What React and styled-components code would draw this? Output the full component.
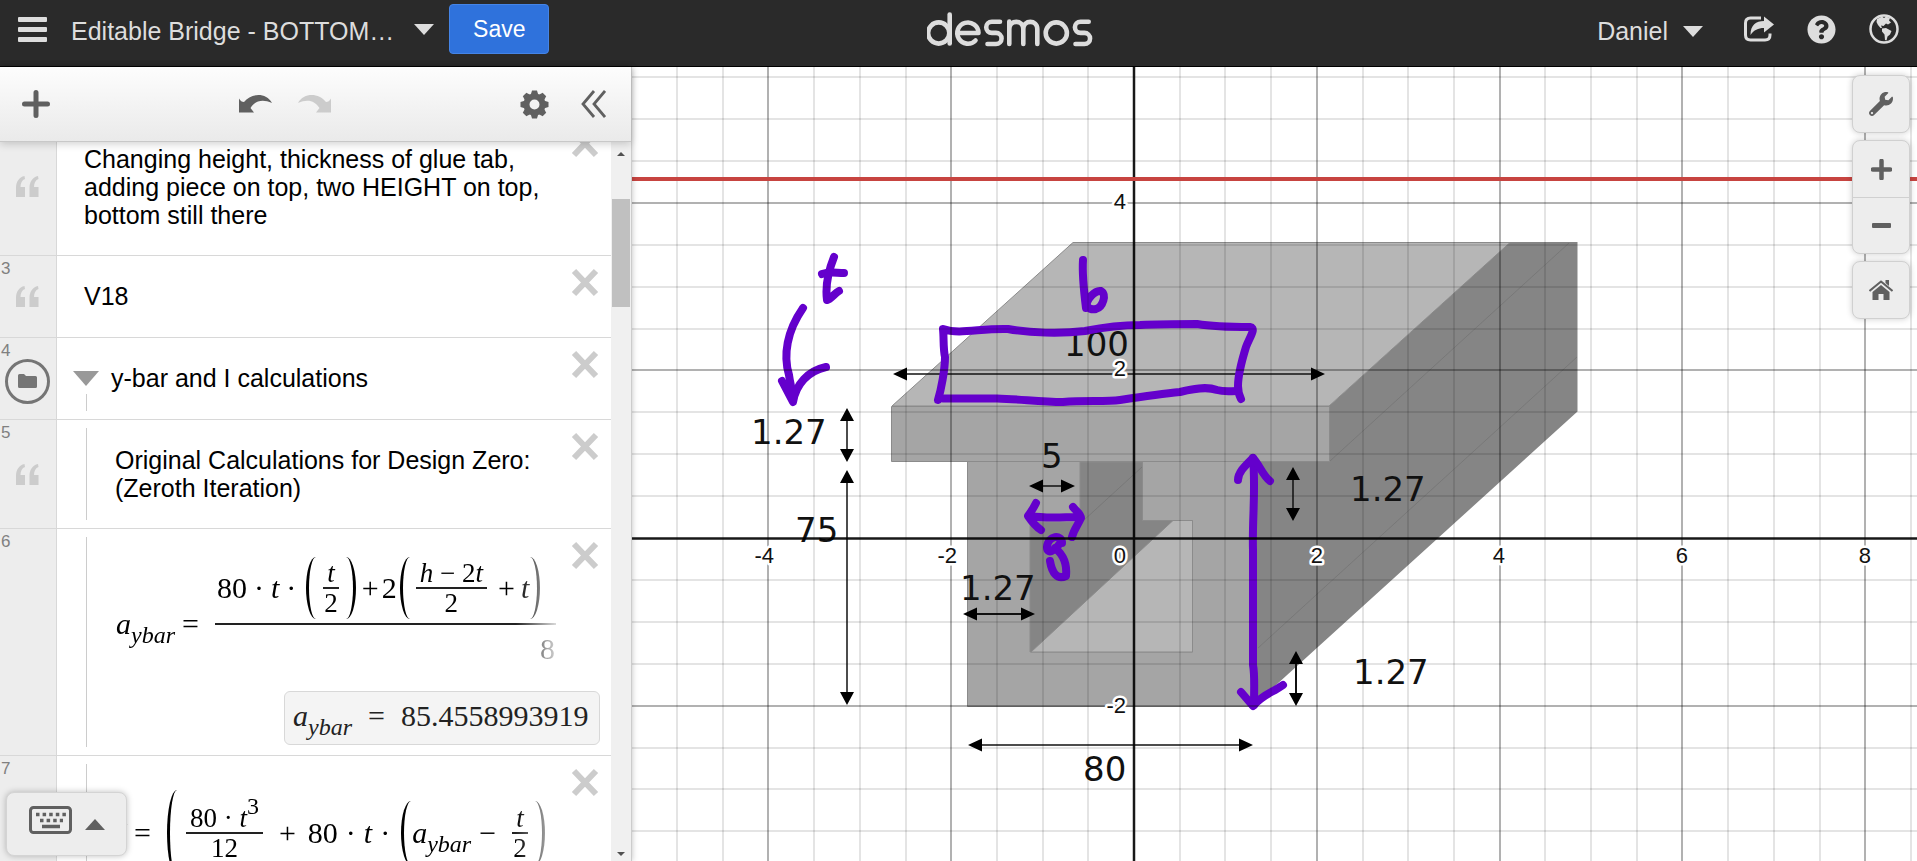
import React from "react";
import styled, { createGlobalStyle, css } from "styled-components";
import { FaWrench, FaQuestionCircle } from "react-icons/fa";

const Global = createGlobalStyle`
  * { box-sizing: border-box; }
  body { margin: 0; background: #fff; overflow: hidden; font-family: "Liberation Sans", Arial, sans-serif; }
  button { font: inherit; color: inherit; background: none; border: 0; padding: 0; cursor: pointer; }
  svg { display: block; }
`;

const Page = styled.div`
  height: 100vh;
  display: flex;
  flex-direction: column;
`;

/* ---------- header ---------- */

const Header = styled.header`
  flex: none;
  height: 67px;
  display: grid;
  grid-template-columns: 9fr 166px 8fr;
  background: #2a2a2a;
  border-bottom: 1px solid #000;
  color: #ddd;
  font-size: 24px;
`;

const HeaderLeft = styled.div`
  display: flex;
  align-items: center;
  height: 58px;
  padding-left: 18px;
`;

const Burger = styled.button`
  width: 29px;
  height: 25px;
  display: flex;
  flex-direction: column;
  justify-content: space-between;
  margin-right: 24px;
`;

const BurgerBar = styled.span`
  height: 5px;
  border-radius: 1px;
  background: #ddd;
`;

const Title = styled.h1`
  margin: 4px 20px 0 0;
  font-size: 25px;
  font-weight: 400;
  line-height: 28px;
  white-space: nowrap;
`;

const Caret = styled.span`
  display: block;
  width: 0;
  height: 0;
  border: ${(p) => p.$half}px solid transparent;
  border-bottom-width: 0;
  border-top: ${(p) => p.$depth}px solid ${(p) => p.$color};
  ${(p) =>
    p.$up &&
    css`
      border-top: 0;
      border-bottom: ${p.$depth}px solid ${p.$color};
    `}
`;

const CaretButton = styled.button`
  margin-right: 15px;
`;

const SaveButton = styled.button`
  width: 100px;
  height: 50px;
  border: 1px solid #4584e6;
  border-radius: 4px;
  background: #2f72dc;
  color: #fff;
  font-size: 23px;
`;

const Logo = styled.a`
  padding-top: 11px;
`;

const HeaderRight = styled.div`
  display: flex;
  align-items: center;
  justify-content: flex-end;
  height: 58px;
  padding-right: 18px;
`;

const Account = styled.button`
  display: flex;
  align-items: center;
  gap: 15px;
  margin: 4px 41px 0 0;
  font-size: 25px;
`;

const HeaderIcon = styled.button`
  margin-left: ${(p) => p.$gap || 0}px;
`;

/* ---------- side panel ---------- */

const Main = styled.main`
  flex: 1;
  min-height: 0;
  display: flex;
`;

const Panel = styled.aside`
  position: relative;
  z-index: 1;
  flex: none;
  width: 632px;
  display: flex;
  flex-direction: column;
  background: #fff;
  border-right: 1px solid #ccc;
  box-shadow: 0 0 6px rgba(0, 0, 0, 0.25);
`;

const Toolbar = styled.div`
  position: relative;
  z-index: 2;
  flex: none;
  height: 75px;
  display: flex;
  align-items: center;
  padding: 0 25px 0 22px;
  background: linear-gradient(#fdfdfd, #eaeaea);
  border-bottom: 1px solid #c8c8c8;
  box-shadow: 0 2px 8px rgba(0, 0, 0, 0.18);
`;

const ToolGroup = styled.div`
  display: flex;
  align-items: center;
  gap: ${(p) => p.$gap}px;
  margin-left: ${(p) => (p.$push ? "auto" : `${p.$left || 0}px`)};
`;

const ListArea = styled.div`
  flex: 1;
  min-height: 0;
  display: flex;
`;

const List = styled.ol`
  flex: 1;
  margin: 0;
  padding: 0;
  list-style: none;
  overflow: hidden;
`;

const ListScroll = styled.div`
  margin-top: -25px;
`;

const Row = styled.li`
  display: grid;
  grid-template-columns: 57px 1fr;
  border-bottom: 1px solid #d8d8d8;
`;

const Gutter = styled.div`
  position: relative;
  display: flex;
  align-items: center;
  padding-left: 16px;
  background: #ededed;
  border-right: 1px solid #d8d8d8;
`;

const RowNumber = styled.span`
  position: absolute;
  left: 1px;
  top: 3px;
  font-size: 17px;
  line-height: 20px;
  color: #808080;
`;

const FolderButton = styled.button`
  width: 45px;
  height: 45px;
  flex: none;
  display: grid;
  place-items: center;
  margin: 5px 0 0 -11px;
  border: 3px solid #757575;
  border-radius: 50%;
`;

const Body = styled.div`
  position: relative;
  padding: ${(p) => p.$pad || "28px 0 26px"};
  padding-left: ${(p) => p.$indent}px;
`;

const TreeLine = styled.span`
  position: absolute;
  left: 29px;
  top: ${(p) => p.$top || 8}px;
  bottom: 8px;
  width: 1px;
  background: #ccc;
`;

const Note = styled.p`
  margin: 0;
  width: ${(p) => p.$w || 470}px;
  font-size: 25px;
  line-height: 28px;
  color: #000;
`;

const FolderTitle = styled(Note)`
  display: flex;
  align-items: center;
  gap: 12px;
`;

const CloseButton = styled.button`
  position: absolute;
  right: 12px;
  top: 12px;
`;

/* ---------- math ---------- */

const Math_ = styled.div`
  display: flex;
  align-items: center;
  width: 440px;
  overflow: hidden;
  white-space: nowrap;
  font-family: "Liberation Serif", "Times New Roman", serif;
  font-size: 30px;
  line-height: 30px;
  color: #000;
  mask-image: linear-gradient(to right, #000 400px, transparent 448px);
`;

const Num = styled.span`
  flex: none;
`;

const Var = styled.i`
  flex: none;
`;

const Sub = styled.sub`
  font-size: 24px;
  line-height: 0;
  vertical-align: -9px;
`;

const Sup = styled.sup`
  font-size: 24px;
  line-height: 0;
  vertical-align: 13px;
`;

const Op = styled.span`
  flex: none;
  margin: 0 ${(p) => (p.$r === undefined ? p.$m : p.$r)}px 0 ${(p) => p.$m}px;
`;

const Paren = styled.span`
  flex: none;
  width: 10px;
  height: ${(p) => p.$h}px;
  margin: 0 ${(p) => (p.$close ? "3px 0 1px" : "1px 0 3px")};
  border: 0 solid #000;
  ${(p) =>
    p.$close
      ? css`
          border-right-width: 3px;
          border-radius: 0 100% 100% 0 / 0 50% 50% 0;
        `
      : css`
          border-left-width: 3px;
          border-radius: 100% 0 0 100% / 50% 0 0 50%;
        `}
`;

const Frac = styled.span`
  flex: none;
  display: flex;
  flex-direction: column;
  align-items: center;
  margin: 0 ${(p) => (p.$m === undefined ? 6 : p.$m)}px;
  font-size: 27px;
  line-height: 28px;
`;

const FracTop = styled.span`
  padding: 0 4px;
  border-bottom: 2px solid #222;
`;

const WideFrac = styled.span`
  flex: none;
  display: flex;
  flex-direction: column;
  width: 420px;
`;

const WideTop = styled.span`
  display: flex;
  align-items: center;
  height: 68px;
  padding: 0 0 4px 2px;
  border-bottom: 2px solid #222;
`;

const WideBottom = styled.span`
  height: 66px;
  padding: 9px 0 0 325px;
`;

const Answer = styled.output`
  display: flex;
  align-items: center;
  width: 316px;
  height: 54px;
  margin: 0 0 10px 168px;
  padding: 0 0 4px 8px;
  border: 1px solid #d8d8d8;
  border-radius: 6px;
  background: #f4f4f4;
  font-family: "Liberation Serif", "Times New Roman", serif;
  font-size: 30px;
  color: #222;
`;

/* ---------- scrollbar and keypad ---------- */

const Scrollbar = styled.div`
  flex: none;
  width: 20px;
  display: flex;
  flex-direction: column;
  align-items: center;
  background: #f0f0f0;
  padding: 10px 0 5px;
`;

const Thumb = styled.div`
  width: 18px;
  height: 108px;
  margin: 43px 0 auto;
  background: #c0c0c0;
`;

const Keypad = styled.button`
  position: absolute;
  left: 6px;
  bottom: 5px;
  width: 121px;
  height: 64px;
  display: flex;
  align-items: center;
  gap: 13px;
  padding: 0 0 9px 22px;
  background: #ededed;
  border: 1px solid #d4d4d4;
  border-radius: 8px;
  box-shadow: 0 0 6px rgba(0, 0, 0, 0.25);
`;

const KeypadCaret = styled(Caret)`
  margin-top: 10px;
`;

/* ---------- graph ---------- */

const Graph = styled.section`
  position: relative;
  flex: 1;
  min-width: 0;
  overflow: hidden;
`;

const Plot = styled.svg`
  width: 100%;
  height: 100%;
`;

const GraphTools = styled.div`
  position: absolute;
  top: 8px;
  right: 7px;
  display: flex;
  flex-direction: column;
  gap: 7px;
`;

const ToolCard = styled.div`
  display: flex;
  flex-direction: column;
  width: 58px;
  background: #ededed;
  border: 1px solid #d0d0d0;
  border-radius: 8px;
  box-shadow: 0 0 6px rgba(0, 0, 0, 0.2);
`;

const GraphButton = styled.button`
  height: 56px;
  display: grid;
  place-items: center;
  color: #606060;
  & + & {
    border-top: 1px solid #d0d0d0;
  }
`;

const Cross = () => (
  <svg width="28" height="29" viewBox="0 0 28 29">
    <path d="M3 3L25 26M25 3L3 26" stroke="#ccc" strokeWidth="6" strokeLinecap="butt" />
  </svg>
);

const Quote = () => (
  <svg width="23" height="21" viewBox="0 0 23 21" fill="#ccc">
    <path d="M8.500 0C3 1 0 6 0 12V21H9V11H4.500C4.500 7 6 4 9 3Z" />
    <path d="M22 0C16.500 1 13.500 6 13.500 12V21H22.500V11H18C18 7 19.500 4 22.500 3Z" />
  </svg>
);

const Undo = ({ color, flip }) => (
  <svg width="33" height="20" viewBox="0 -1 33 20">
    <path
      fill={color}
      transform={flip ? "translate(33 0) scale(-1 1)" : undefined}
      d="M0 3.500Q2 7 5 7C12 -2 27 -3 33 8C23 3.500 16 6 11.500 13L15 17.500H0Z"
    />
  </svg>
);

const Plus = ({ size, weight }) => (
  <svg width={size} height={size} viewBox="0 0 28 28">
    <path
      d="M14 2.500V25.500M2.500 14H25.500"
      stroke="#606060"
      strokeWidth={weight}
      strokeLinecap="round"
    />
  </svg>
);

const Gear = () => (
  <svg width="29" height="29" viewBox="-14.500 -14.500 29 29">
    <circle r="8" fill="none" stroke="#606060" strokeWidth="6" />
    {[0, 45, 90, 135, 180, 225, 270, 315].map((a) => (
      <path key={a} d="M-4-9L-2.500-14H2.500L4-9Z" fill="#606060" transform={`rotate(${a})`} />
    ))}
  </svg>
);

const DesmosLogo = () => (
  <svg width="168" height="40" viewBox="927 11 168 40" role="img" aria-label="desmos">
    <g fill="none" stroke="#ddd" strokeWidth="4.600" strokeLinecap="round" strokeLinejoin="round">
      <circle cx="938.700" cy="33" r="10.600" />
      <path d="M949.700 14.500V43.500" />
      <path d="M958 33H978.500A10.600 10.600 0 1 0 975.500 40.500" />
      <path d="M1000 21.700H991.800A5.500 5.500 0 0 0 991.800 32.900H996A5.500 5.500 0 0 1 996 44H987.500" />
      <path d="M1009.300 44V21.500M1009.300 29C1009.300 19.500 1023.300 19.500 1023.300 29V44M1023.300 29C1023.300 19.500 1037.300 19.500 1037.300 29V44" />
      <circle cx="1056.300" cy="33" r="10.600" />
      <path d="M1088.700 21.700H1080.500A5.500 5.500 0 0 0 1080.500 32.900H1084.500A5.500 5.500 0 0 1 1084.500 44H1075.500" />
    </g>
  </svg>
);

/* Distances from the origin, in pixels, of each half-unit of the grid. */
const STEP_X = 45.7;
const STEP_Y = 41.9;
const range = (a, b) => Array.from({ length: b - a + 1 }, (_, i) => a + i);

const AXIS_LABELS = [
  { t: "-4", x: -360, y: 25 },
  { t: "-2", x: -177, y: 25 },
  { t: "0", x: -8, y: 25 },
  { t: "2", x: 189, y: 25 },
  { t: "4", x: 371, y: 25 },
  { t: "6", x: 554, y: 25 },
  { t: "8", x: 737, y: 25 },
  { t: "4", x: -8, y: -329 },
  { t: "2", x: -8, y: -162 },
  { t: "-2", x: -8, y: 175 },
];

const DIMENSIONS = [
  { t: "1.27", x: 751, y: 444 },
  { t: "75", x: 795, y: 542 },
  { t: "100", x: 1064, y: 356 },
  { t: "5", x: 1041, y: 468 },
  { t: "1.27", x: 960, y: 600 },
  { t: "80", x: 1083, y: 781 },
  { t: "1.27", x: 1350, y: 501 },
  { t: "1.27", x: 1353, y: 684 },
];

const Arrow = ({ x1, y1, x2, y2, w = 1.5 }) => {
  const h = x1 !== x2;
  return (
    <g fill="#000">
      <line x1={x1 + (h ? 4 : 0)} y1={y1 + (h ? 0 : 4)} x2={x2 - (h ? 4 : 0)} y2={y2 - (h ? 0 : 4)} stroke="#111" strokeWidth={w} />
      {h ? (
        <path d={`M${x1} ${y1}l14-6.500v13zM${x2} ${y2}l-14-6.500v13z`} />
      ) : (
        <path d={`M${x1} ${y1}l-7 13h14zM${x2} ${y2}l-7-13h14z`} />
      )}
    </g>
  );
};

const INK = [
  "M803 308C787 331 783 355 789 375C790 383 792 389 793 397",
  "M782 381L793 402C796 384 808 371 826 367",
  "M834 257C828 272 825 285 827 300C831 299 835 293 839 291",
  "M822 274C830 271 836 273 844 273",
  "M1083 260C1082 275 1084 292 1086 308C1086 299 1095 290 1101 291C1107 294 1103 307 1096 309C1092 310 1088 309 1086 304",
  "M938 400C941 390 945 370 945 357C943 348 944 338 943 329C960 335 980 328 1008 329C1030 333 1060 334 1085 331C1105 327 1120 325 1140 325C1160 324 1180 324 1197 324C1215 327 1232 327 1250 327C1257 328 1249 338 1246 347C1242 360 1238 375 1238 386C1238 390 1239 395 1241 399",
  "M943 398.500H997C1020 399 1040 402 1063 402C1085 400 1105 402 1120 400C1140 397 1160 394 1180 392C1192 389 1206 386 1217 390C1224 392 1230 391 1237 391",
  "M1036 503C1034 507 1031 512 1028 516C1032 522 1035 526 1041 530M1030 516C1047 519 1064 517 1080 517M1073 507C1076 511 1081 514 1081 518C1078 525 1074 529 1072 537",
  "M1062 543C1062 534 1048 535 1047 547C1047 555 1055 551 1060 543M1055 548C1065 556 1067 566 1066 576C1057 580 1052 573 1050 561",
  "M1253 458C1256 490 1252 520 1253 550V665C1255 675 1254 690 1254 705",
  "M1238 480C1238 472 1246 465 1253 458C1259 464 1263 476 1270 481",
  "M1241 692L1253 706C1263 694 1272 693 1283 685",
];

const Plane = () => (
  <Plot>
    <rect width="100%" height="100%" fill="#fff" />
    <g transform="translate(-632 -67)">
      <g stroke="#8b8b8b" strokeWidth="1">
        <path d="M1329 406L1510 242H1577.500V411.500L1253 706V462H1329Z" fill="#858585" stroke="none" />
        <path d="M892 406L1073 242.500H1510L1329 406Z" fill="#b6b6b6" />
        <path d="M967.500 462H1255V706.500H967.500Z" fill="#a5a5a5" stroke="none" />
        <path d="M1080 462H1142.500V520.500H1192.500V652H1030V522H1080Z" fill="#858585" />
        <path d="M1031 652L1173 520.500H1192.500V652Z" fill="#b6b6b6" />
        <path d="M891.500 406.500H1329.500V461.500H891.500Z" fill="#a5a5a5" />
        <path d="M1330 461L1569 243M1258 648L1577 357M1083 521L1142 467" stroke="#787878" fill="none" />
        <path d="M967.500 462V706.500H1253" fill="none" />
      </g>
      <Arrow x1={893} y1={374} x2={1325} y2={374} />
      <Arrow x1={847} y1={408} x2={847} y2={462} />
      <Arrow x1={847} y1={470} x2={847} y2={705} />
      <Arrow x1={1029} y1={486} x2={1075} y2={486} />
      <Arrow x1={963} y1={614} x2={1035} y2={614} w={2} />
      <Arrow x1={968} y1={745} x2={1253} y2={745} />
      <Arrow x1={1293} y1={467} x2={1293} y2={521} />
      <Arrow x1={1296} y1={651} x2={1296} y2={706} w={2} />
      <g fontFamily='"DejaVu Sans", sans-serif' fontSize="34" fill="#111">
        {DIMENSIONS.map((d) => (
          <text key={`${d.x}-${d.y}`} x={d.x} y={d.y}>
            {d.t}
          </text>
        ))}
      </g>
      <g fill="none" stroke="#6400cc" strokeWidth="8" strokeLinecap="round" strokeLinejoin="round">
        {INK.map((d) => (
          <path key={d} d={d} />
        ))}
      </g>
    </g>
    <g transform="translate(502 471)">
      <g stroke="#000" strokeWidth="2">
        {range(-12, 80)
          .filter((k) => k !== 0)
          .map((k) => {
            const x = Math.round(k * STEP_X);
            return <line key={k} x1={x} x2={x} y1="-900" y2="2400" opacity={k % 4 ? 0.1 : 0.3} />;
          })}
        {range(-14, 50)
          .filter((k) => k !== 0)
          .map((k) => {
            const y = Math.round(k * STEP_Y);
            return <line key={k} x1="-600" x2="4000" y1={y} y2={y} opacity={k % 4 ? 0.1 : 0.3} />;
          })}
      </g>
      <path d="M0-900V2400M-600 0.500H4000" stroke="#000" strokeWidth="2.500" opacity="0.900" />
      <line x1="-600" x2="4000" y1="-359" y2="-359" stroke="#c74440" strokeWidth="4" />
      <g
        fontFamily='"Liberation Sans", Arial, sans-serif'
        fontSize="22"
        textAnchor="end"
        fill="#111"
        stroke="#fff"
        strokeWidth="5"
        strokeLinejoin="round"
        paintOrder="stroke"
      >
        {AXIS_LABELS.map((l) => (
          <text key={`${l.x} ${l.y}`} x={l.x} y={l.y}>
            {l.t}
          </text>
        ))}
      </g>
    </g>
  </Plot>
);

const Entry = ({ n, icon, indent, pad, tree, children }) => (
  <Row>
    <Gutter>
      {n ? <RowNumber>{n}</RowNumber> : null}
      {icon}
    </Gutter>
    <Body $indent={indent} $pad={pad}>
      {tree ? <TreeLine $top={tree} /> : null}
      {children}
      <CloseButton aria-label="Delete">
        <Cross />
      </CloseButton>
    </Body>
  </Row>
);

const AYbar = () => (
  <Var>
    a<Sub>ybar</Sub>
  </Var>
);

export default function App() {
  return (
    <Page>
      <Global />
      <Header>
        <HeaderLeft>
          <Burger aria-label="Open graph menu">
            <BurgerBar />
            <BurgerBar />
            <BurgerBar />
          </Burger>
          <Title>Editable Bridge - BOTTOM…</Title>
          <CaretButton aria-label="Graph options">
            <Caret $half={10} $depth={11} $color="#ddd" />
          </CaretButton>
          <SaveButton>Save</SaveButton>
        </HeaderLeft>
        <Logo href="#">
          <DesmosLogo />
        </Logo>
        <HeaderRight>
          <Account>
            Daniel
            <Caret $half={10} $depth={11} $color="#ddd" />
          </Account>
          <HeaderIcon aria-label="Share graph">
            <svg width="30" height="26" viewBox="0 0 30 26">
              <path d="M17 2H6.500Q1.500 2 1.500 7V19Q1.500 24 6.500 24H21Q26 24 26 19V17.500" fill="none" stroke="#ddd" strokeWidth="3" />
              <path d="M6.500 19C6.500 9 12 5 20 5V0.500L30 8.500L20 16.500V12C14 12 10 14 6.500 19Z" fill="#ddd" />
            </svg>
          </HeaderIcon>
          <HeaderIcon aria-label="Help" $gap={33}>
            <FaQuestionCircle size={29} />
          </HeaderIcon>
          <HeaderIcon aria-label="Language" $gap={33}>
            <svg width="30" height="30" viewBox="0 0 30 30" fill="#ddd">
              <circle cx="15" cy="15" r="13.500" fill="none" stroke="#ddd" strokeWidth="2.500" />
              <path d="M8 5L13 2.500L15 4L17 2.500L21 4L20 6.500L22 8.500L19 10.500L17 9.500L14.500 12L12 11.500L13 14L11.500 14L9 11L7.500 8Z" />
              <path d="M13 14.500L17 14L22.500 17L21 20.500L18.500 22.500L17.500 26.500L16 26L15.500 20.500L13 17.500Z" />
            </svg>
          </HeaderIcon>
        </HeaderRight>
      </Header>

      <Main>
        <Panel>
          <Toolbar>
            <button aria-label="Add item">
              <Plus size={28} weight={5} />
            </button>
            <ToolGroup $gap={26} $left={189}>
              <button aria-label="Undo">
                <Undo color="#606060" />
              </button>
              <button aria-label="Redo">
                <Undo color="#ccc" flip />
              </button>
            </ToolGroup>
            <ToolGroup $gap={32} $push>
              <button aria-label="Edit list">
                <Gear />
              </button>
              <button aria-label="Hide list">
                <svg width="25" height="28" viewBox="0 0 25 28" fill="none" stroke="#606060" strokeWidth="2.800">
                  <path d="M13 1L2 14L13 27M24 1L13 14L24 27" />
                </svg>
              </button>
            </ToolGroup>
          </Toolbar>

          <ListArea>
            <List>
              <ListScroll>
                <Entry icon={<Quote />} indent={27}>
                  <Note>
                    Changing height, thickness of glue tab, adding piece on top, two HEIGHT on top, bottom still there
                  </Note>
                </Entry>
                <Entry n="3" icon={<Quote />} indent={27} pad="26px 0 27px">
                  <Note>V18</Note>
                </Entry>
                <Entry
                  n="4"
                  indent={16}
                  pad="26px 0 27px"
                  tree={56}
                  icon={
                    <FolderButton aria-label="Folder">
                      <svg width="19" height="14" viewBox="0 0 19 14" fill="#757575">
                        <path d="M0 1.500Q0 0 1.500 0H6L8 2H17.500Q19 2 19 3.500V12.500Q19 14 17.500 14H1.500Q0 14 0 12.500Z" />
                      </svg>
                    </FolderButton>
                  }
                >
                  <FolderTitle>
                    <button aria-label="Collapse folder">
                      <Caret $half={13} $depth={15} $color="#999" />
                    </button>
                    y-bar and I calculations
                  </FolderTitle>
                </Entry>
                <Entry n="5" icon={<Quote />} indent={58} pad="26px 0 26px" tree={8}>
                  <Note $w={430}>Original Calculations for Design Zero: (Zeroth Iteration)</Note>
                </Entry>
                <Entry n="6" indent={59} pad="28px 0 0" tree={8}>
                  <Math_>
                    <AYbar />
                    <Op $m={7} $r={16}>
                      =
                    </Op>
                    <WideFrac>
                      <WideTop>
                        <Num>80</Num>
                        <Op $m={7}>·</Op>
                        <Var>t</Var>
                        <Op $m={7}>·</Op>
                        <Paren $h={62} />
                        <Frac>
                          <FracTop>
                            <Var>t</Var>
                          </FracTop>
                          <Num>2</Num>
                        </Frac>
                        <Paren $h={62} $close />
                        <Op $m={3}>+</Op>
                        <Num>2</Num>
                        <Paren $h={62} />
                        <Frac $m={5}>
                          <FracTop>
                            <Var>h</Var> − 2<Var>t</Var>
                          </FracTop>
                          <Num>2</Num>
                        </Frac>
                        <Op $m={6}>+</Op>
                        <Var>t</Var>
                        <Paren $h={62} $close />
                      </WideTop>
                      <WideBottom>8</WideBottom>
                    </WideFrac>
                  </Math_>
                  <Answer>
                    <AYbar />
                    <Op $m={16}>=</Op>
                    <Num>85.4558993919</Num>
                  </Answer>
                </Entry>
                <Entry n="7" indent={59} pad="34px 0 20px" tree={8}>
                  <Math_>
                    <Var>I</Var>
                    <Op $m={8} $r={13}>
                      =
                    </Op>
                    <Paren $h={86} />
                    <Frac $m={8}>
                      <FracTop>
                        80 · <Var>t</Var>
                        <Sup>3</Sup>
                      </FracTop>
                      <Num>12</Num>
                    </Frac>
                    <Op $m={8} $r={12}>
                      +
                    </Op>
                    <Num>80</Num>
                    <Op $m={8}>·</Op>
                    <Var>t</Var>
                    <Op $m={8}>·</Op>
                    <Paren $h={64} />
                    <AYbar />
                    <Op $m={8} $r={10}>
                      −
                    </Op>
                    <Frac>
                      <FracTop>
                        <Var>t</Var>
                      </FracTop>
                      <Num>2</Num>
                    </Frac>
                    <Paren $h={64} $close />
                  </Math_>
                </Entry>
              </ListScroll>
            </List>
            <Scrollbar aria-hidden="true">
              <Caret $half={4} $depth={4} $color="#505050" $up />
              <Thumb />
              <Caret $half={4} $depth={4} $color="#505050" />
            </Scrollbar>
          </ListArea>

          <Keypad aria-label="Show keypad">
            <svg width="43" height="28" viewBox="0 0 43 28">
              <rect x="1.500" y="1.500" width="40" height="25" rx="3" fill="none" stroke="#606060" strokeWidth="3" />
              <path d="M7 8.500H37" stroke="#606060" strokeWidth="3.500" strokeDasharray="3.500 3.100" />
              <path d="M11 14.500H34" stroke="#606060" strokeWidth="3.500" strokeDasharray="3.500 3.100" />
              <path d="M13 20.500H31" stroke="#606060" strokeWidth="3.500" />
            </svg>
            <KeypadCaret $half={10} $depth={11} $color="#606060" $up />
          </Keypad>
        </Panel>

        <Graph>
          <Plane />
          <GraphTools>
            <ToolCard>
              <GraphButton aria-label="Graph settings">
                <FaWrench size={24} />
              </GraphButton>
            </ToolCard>
            <ToolCard>
              <GraphButton aria-label="Zoom in">
                <Plus size={21} weight={6} />
              </GraphButton>
              <GraphButton aria-label="Zoom out">
                <svg width="19" height="5" viewBox="0 0 19 5">
                  <rect width="19" height="5" rx="1" fill="#606060" />
                </svg>
              </GraphButton>
            </ToolCard>
            <ToolCard>
              <GraphButton aria-label="Default viewport">
                <svg width="24" height="20" viewBox="0 0 24 20" fill="#606060">
                  <path d="M12 5L20.500 12V20H14.500V14H9.500V20H3.500V12Z" />
                  <path d="M16.500 0H20V6L16.500 3Z" />
                  <path d="M0.500 11L12 1.500L23.500 11" fill="none" stroke="#606060" strokeWidth="2" />
                </svg>
              </GraphButton>
            </ToolCard>
          </GraphTools>
        </Graph>
      </Main>
    </Page>
  );
}
